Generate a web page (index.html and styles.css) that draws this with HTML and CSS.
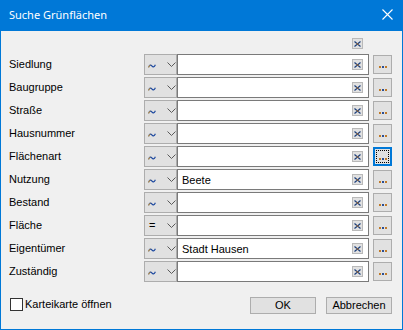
FILE: index.html
```html
<!DOCTYPE html>
<html lang="de">
<head>
<meta charset="utf-8">
<title>Suche Grünflächen</title>
<link rel="stylesheet" href="styles.css">
</head>
<body>
<div class="window">
  <div class="titlebar">
    <span class="title">Suche Grünflächen</span>
    <svg class="close" width="11" height="11" viewBox="0 0 11 11"><path d="M0.5 0.5 L10.5 10.5 M10.5 0.5 L0.5 10.5" stroke="#fff" stroke-width="1.1" fill="none"/></svg>
  </div>
  <div class="content">
    <div class="clear-all">
      <span class="xbtn"><svg width="7" height="6" viewBox="0 0 7 6"><path d="M0.5 0.5 L6.5 5.5 M6.5 0.5 L0.5 5.5" stroke="#1d3f7a" stroke-width="1.2"/><path d="M2.5 2 L4.5 4" stroke="#c9781f" stroke-width="1"/></svg></span>
    </div>
    <div class="rows">
      <div class="row">
        <span class="label">Siedlung</span>
        <span class="combo"><svg class="op" width="8" height="4" viewBox="0 0 8 4"><path d="M0.6 3.4 C1.4 0.8 2.8 0.6 3.8 1.9 S6.2 3.4 7.4 0.8" stroke="#1f4ba0" stroke-width="1.2" fill="none"/><path d="M0.6 3.4 C1 2.2 1.5 1.4 2.3 1.1" stroke="#e0a030" stroke-width="1" fill="none"/></svg><svg class="chev" width="9" height="5" viewBox="0 0 9 5"><path d="M0.5 0.5 L4.5 4.5 L8.5 0.5" stroke="#5a5a5a" stroke-width="1" fill="none"/></svg></span>
        <span class="textbox"><span class="val"></span><span class="xbtn"><svg width="7" height="6" viewBox="0 0 7 6"><path d="M0.5 0.5 L6.5 5.5 M6.5 0.5 L0.5 5.5" stroke="#1d3f7a" stroke-width="1.2"/><path d="M2.5 2 L4.5 4" stroke="#c9781f" stroke-width="1"/></svg></span></span>
        <span class="dots"><i class="d1"></i><i class="d2"></i><i class="d3"></i></span>
      </div>
      <div class="row">
        <span class="label">Baugruppe</span>
        <span class="combo"><svg class="op" width="8" height="4" viewBox="0 0 8 4"><path d="M0.6 3.4 C1.4 0.8 2.8 0.6 3.8 1.9 S6.2 3.4 7.4 0.8" stroke="#1f4ba0" stroke-width="1.2" fill="none"/><path d="M0.6 3.4 C1 2.2 1.5 1.4 2.3 1.1" stroke="#e0a030" stroke-width="1" fill="none"/></svg><svg class="chev" width="9" height="5" viewBox="0 0 9 5"><path d="M0.5 0.5 L4.5 4.5 L8.5 0.5" stroke="#5a5a5a" stroke-width="1" fill="none"/></svg></span>
        <span class="textbox"><span class="val"></span><span class="xbtn"><svg width="7" height="6" viewBox="0 0 7 6"><path d="M0.5 0.5 L6.5 5.5 M6.5 0.5 L0.5 5.5" stroke="#1d3f7a" stroke-width="1.2"/><path d="M2.5 2 L4.5 4" stroke="#c9781f" stroke-width="1"/></svg></span></span>
        <span class="dots"><i class="d1"></i><i class="d2"></i><i class="d3"></i></span>
      </div>
      <div class="row">
        <span class="label">Straße</span>
        <span class="combo"><svg class="op" width="8" height="4" viewBox="0 0 8 4"><path d="M0.6 3.4 C1.4 0.8 2.8 0.6 3.8 1.9 S6.2 3.4 7.4 0.8" stroke="#1f4ba0" stroke-width="1.2" fill="none"/><path d="M0.6 3.4 C1 2.2 1.5 1.4 2.3 1.1" stroke="#e0a030" stroke-width="1" fill="none"/></svg><svg class="chev" width="9" height="5" viewBox="0 0 9 5"><path d="M0.5 0.5 L4.5 4.5 L8.5 0.5" stroke="#5a5a5a" stroke-width="1" fill="none"/></svg></span>
        <span class="textbox"><span class="val"></span><span class="xbtn"><svg width="7" height="6" viewBox="0 0 7 6"><path d="M0.5 0.5 L6.5 5.5 M6.5 0.5 L0.5 5.5" stroke="#1d3f7a" stroke-width="1.2"/><path d="M2.5 2 L4.5 4" stroke="#c9781f" stroke-width="1"/></svg></span></span>
        <span class="dots"><i class="d1"></i><i class="d2"></i><i class="d3"></i></span>
      </div>
      <div class="row">
        <span class="label">Hausnummer</span>
        <span class="combo"><svg class="op" width="8" height="4" viewBox="0 0 8 4"><path d="M0.6 3.4 C1.4 0.8 2.8 0.6 3.8 1.9 S6.2 3.4 7.4 0.8" stroke="#1f4ba0" stroke-width="1.2" fill="none"/><path d="M0.6 3.4 C1 2.2 1.5 1.4 2.3 1.1" stroke="#e0a030" stroke-width="1" fill="none"/></svg><svg class="chev" width="9" height="5" viewBox="0 0 9 5"><path d="M0.5 0.5 L4.5 4.5 L8.5 0.5" stroke="#5a5a5a" stroke-width="1" fill="none"/></svg></span>
        <span class="textbox"><span class="val"></span><span class="xbtn"><svg width="7" height="6" viewBox="0 0 7 6"><path d="M0.5 0.5 L6.5 5.5 M6.5 0.5 L0.5 5.5" stroke="#1d3f7a" stroke-width="1.2"/><path d="M2.5 2 L4.5 4" stroke="#c9781f" stroke-width="1"/></svg></span></span>
        <span class="dots"><i class="d1"></i><i class="d2"></i><i class="d3"></i></span>
      </div>
      <div class="row">
        <span class="label">Flächenart</span>
        <span class="combo"><svg class="op" width="8" height="4" viewBox="0 0 8 4"><path d="M0.6 3.4 C1.4 0.8 2.8 0.6 3.8 1.9 S6.2 3.4 7.4 0.8" stroke="#1f4ba0" stroke-width="1.2" fill="none"/><path d="M0.6 3.4 C1 2.2 1.5 1.4 2.3 1.1" stroke="#e0a030" stroke-width="1" fill="none"/></svg><svg class="chev" width="9" height="5" viewBox="0 0 9 5"><path d="M0.5 0.5 L4.5 4.5 L8.5 0.5" stroke="#5a5a5a" stroke-width="1" fill="none"/></svg></span>
        <span class="textbox"><span class="val"></span><span class="xbtn"><svg width="7" height="6" viewBox="0 0 7 6"><path d="M0.5 0.5 L6.5 5.5 M6.5 0.5 L0.5 5.5" stroke="#1d3f7a" stroke-width="1.2"/><path d="M2.5 2 L4.5 4" stroke="#c9781f" stroke-width="1"/></svg></span></span>
        <span class="dots focused"><i class="d1"></i><i class="d2"></i><i class="d3"></i></span>
      </div>
      <div class="row">
        <span class="label">Nutzung</span>
        <span class="combo"><svg class="op" width="8" height="4" viewBox="0 0 8 4"><path d="M0.6 3.4 C1.4 0.8 2.8 0.6 3.8 1.9 S6.2 3.4 7.4 0.8" stroke="#1f4ba0" stroke-width="1.2" fill="none"/><path d="M0.6 3.4 C1 2.2 1.5 1.4 2.3 1.1" stroke="#e0a030" stroke-width="1" fill="none"/></svg><svg class="chev" width="9" height="5" viewBox="0 0 9 5"><path d="M0.5 0.5 L4.5 4.5 L8.5 0.5" stroke="#5a5a5a" stroke-width="1" fill="none"/></svg></span>
        <span class="textbox"><span class="val">Beete</span><span class="xbtn"><svg width="7" height="6" viewBox="0 0 7 6"><path d="M0.5 0.5 L6.5 5.5 M6.5 0.5 L0.5 5.5" stroke="#1d3f7a" stroke-width="1.2"/><path d="M2.5 2 L4.5 4" stroke="#c9781f" stroke-width="1"/></svg></span></span>
        <span class="dots"><i class="d1"></i><i class="d2"></i><i class="d3"></i></span>
      </div>
      <div class="row">
        <span class="label">Bestand</span>
        <span class="combo"><svg class="op" width="8" height="4" viewBox="0 0 8 4"><path d="M0.6 3.4 C1.4 0.8 2.8 0.6 3.8 1.9 S6.2 3.4 7.4 0.8" stroke="#1f4ba0" stroke-width="1.2" fill="none"/><path d="M0.6 3.4 C1 2.2 1.5 1.4 2.3 1.1" stroke="#e0a030" stroke-width="1" fill="none"/></svg><svg class="chev" width="9" height="5" viewBox="0 0 9 5"><path d="M0.5 0.5 L4.5 4.5 L8.5 0.5" stroke="#5a5a5a" stroke-width="1" fill="none"/></svg></span>
        <span class="textbox"><span class="val"></span><span class="xbtn"><svg width="7" height="6" viewBox="0 0 7 6"><path d="M0.5 0.5 L6.5 5.5 M6.5 0.5 L0.5 5.5" stroke="#1d3f7a" stroke-width="1.2"/><path d="M2.5 2 L4.5 4" stroke="#c9781f" stroke-width="1"/></svg></span></span>
        <span class="dots"><i class="d1"></i><i class="d2"></i><i class="d3"></i></span>
      </div>
      <div class="row">
        <span class="label">Fläche</span>
        <span class="combo"><span class="eq">=</span><svg class="chev" width="9" height="5" viewBox="0 0 9 5"><path d="M0.5 0.5 L4.5 4.5 L8.5 0.5" stroke="#5a5a5a" stroke-width="1" fill="none"/></svg></span>
        <span class="textbox"><span class="val"></span><span class="xbtn"><svg width="7" height="6" viewBox="0 0 7 6"><path d="M0.5 0.5 L6.5 5.5 M6.5 0.5 L0.5 5.5" stroke="#1d3f7a" stroke-width="1.2"/><path d="M2.5 2 L4.5 4" stroke="#c9781f" stroke-width="1"/></svg></span></span>
        <span class="dots"><i class="d1"></i><i class="d2"></i><i class="d3"></i></span>
      </div>
      <div class="row">
        <span class="label">Eigentümer</span>
        <span class="combo"><svg class="op" width="8" height="4" viewBox="0 0 8 4"><path d="M0.6 3.4 C1.4 0.8 2.8 0.6 3.8 1.9 S6.2 3.4 7.4 0.8" stroke="#1f4ba0" stroke-width="1.2" fill="none"/><path d="M0.6 3.4 C1 2.2 1.5 1.4 2.3 1.1" stroke="#e0a030" stroke-width="1" fill="none"/></svg><svg class="chev" width="9" height="5" viewBox="0 0 9 5"><path d="M0.5 0.5 L4.5 4.5 L8.5 0.5" stroke="#5a5a5a" stroke-width="1" fill="none"/></svg></span>
        <span class="textbox"><span class="val">Stadt Hausen</span><span class="xbtn"><svg width="7" height="6" viewBox="0 0 7 6"><path d="M0.5 0.5 L6.5 5.5 M6.5 0.5 L0.5 5.5" stroke="#1d3f7a" stroke-width="1.2"/><path d="M2.5 2 L4.5 4" stroke="#c9781f" stroke-width="1"/></svg></span></span>
        <span class="dots"><i class="d1"></i><i class="d2"></i><i class="d3"></i></span>
      </div>
      <div class="row">
        <span class="label">Zuständig</span>
        <span class="combo"><svg class="op" width="8" height="4" viewBox="0 0 8 4"><path d="M0.6 3.4 C1.4 0.8 2.8 0.6 3.8 1.9 S6.2 3.4 7.4 0.8" stroke="#1f4ba0" stroke-width="1.2" fill="none"/><path d="M0.6 3.4 C1 2.2 1.5 1.4 2.3 1.1" stroke="#e0a030" stroke-width="1" fill="none"/></svg><svg class="chev" width="9" height="5" viewBox="0 0 9 5"><path d="M0.5 0.5 L4.5 4.5 L8.5 0.5" stroke="#5a5a5a" stroke-width="1" fill="none"/></svg></span>
        <span class="textbox"><span class="val"></span><span class="xbtn"><svg width="7" height="6" viewBox="0 0 7 6"><path d="M0.5 0.5 L6.5 5.5 M6.5 0.5 L0.5 5.5" stroke="#1d3f7a" stroke-width="1.2"/><path d="M2.5 2 L4.5 4" stroke="#c9781f" stroke-width="1"/></svg></span></span>
        <span class="dots"><i class="d1"></i><i class="d2"></i><i class="d3"></i></span>
      </div>
    </div>
    <div class="footer">
      <span class="check"><span class="box"></span><span class="check-label">Karteikarte öffnen</span></span>
      <span class="btn">OK</span>
      <span class="btn">Abbrechen</span>
    </div>
  </div>
</div>
</body>
</html>
```

FILE: styles.css
```css
* { box-sizing: border-box; }
html, body { margin: 0; padding: 0; background: #f0f0f0; }

.window {
  width: 403px;
  height: 330px;
  background: #f0f0f0;
  border: 1px solid #0078d7;
  border-top: 0;
  font-family: "Liberation Sans", Arial, sans-serif;
  font-size: 11px;
  color: #000;
}

.titlebar {
  height: 31px;
  background: #0078d7;
  display: flex;
  align-items: center;
  padding: 0 9px 1px 8px;
  justify-content: space-between;
}
.title {
  font-family: "Noto Sans", sans-serif;
  font-size: 11px;
  color: #fff;
  margin-top: -1px;
}
.close { display: block; margin-top: -1px; }

.content {
  padding: 7px 10px 0 8px;
}

.clear-all {
  display: flex;
  justify-content: flex-end;
  padding-right: 29px;
  height: 11px;
}

.xbtn {
  width: 11px;
  height: 11px;
  background: #e1e1e1;
  border: 1px solid #b9b9b9;
  display: flex;
  align-items: center;
  justify-content: center;
  flex: none;
}
.xbtn svg { display: block; }

.rows {
  margin-top: 5px;
  display: grid;
  grid-auto-rows: 21px;
  row-gap: 2px;
}

.row {
  display: grid;
  grid-template-columns: 135px 33px 192px 23px;
  align-items: center;
}
.row .dots { margin-left: 4px; }

.label {
  line-height: 21px;
  white-space: nowrap;
}

.combo {
  height: 21px;
  background: #e1e1e1;
  border: 1px solid #adadad;
  display: flex;
  align-items: center;
  padding-left: 3px;
}
.combo .op { display: block; margin-top: 2px; margin-right: 1px; }
.combo .chev { display: block; margin-left: 10px; }
.combo .eq {
  width: 9px;
  font-size: 11px;
  line-height: 1;
  padding-left: 1px;
}

.textbox {
  height: 21px;
  background: #fff;
  border: 1px solid #7a7a7a;
  display: flex;
  align-items: center;
  padding: 0 5px 0 4px;
}
.textbox .val {
  flex: 1;
  white-space: nowrap;
  padding-top: 1px;
}

.dots {
  width: 19px;
  height: 19px;
  background: #e1e1e1;
  border: 1px solid #adadad;
  display: flex;
  align-items: flex-end;
  justify-content: center;
  padding-bottom: 5px;
}
.dots i {
  display: block;
  width: 2px;
  height: 2px;
}
.dots .d1 { background: #c07a28; }
.dots .d2 { background: #2a4f96; }
.dots .d3 { background: #c07a28; }
.dots i + i { margin-left: 1px; }

.dots.focused {
  border: 2px solid #0078d7;
  outline: 1px dotted #000;
  outline-offset: -4px;
  padding-bottom: 4px;
}

.footer {
  margin-top: 15px;
  display: flex;
  align-items: flex-start;
}
.check {
  display: flex;
  align-items: center;
  flex: 1;
  height: 14px;
  padding-left: 1px;
}
.check .box {
  width: 13px;
  height: 13px;
  border: 1px solid #333;
  background: #fff;
  margin-right: 2px;
}
.check-label { line-height: 13px; }

.btn {
  width: 66px;
  height: 17px;
  background: #e1e1e1;
  border: 1px solid #adadad;
  display: flex;
  align-items: center;
  justify-content: center;
  margin-left: 10px;
  line-height: 1;
}
```
